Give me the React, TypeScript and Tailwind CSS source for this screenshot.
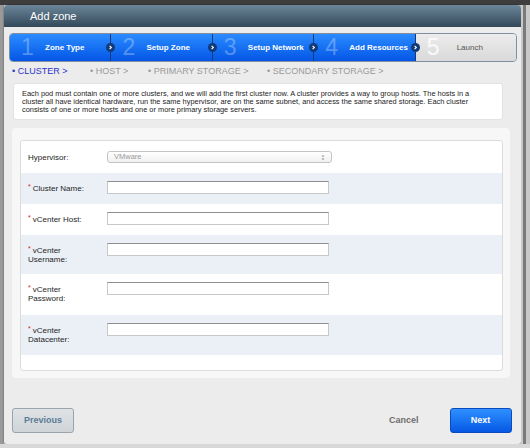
import React from "react";

const steps = [
  { n: "1", label: "Zone Type" },
  { n: "2", label: "Setup Zone" },
  { n: "3", label: "Setup Network" },
  { n: "4", label: "Add Resources" },
];

function Chevron() {
  return (
    <div className="w-[9px] h-[9px] rounded-full bg-[#123a78] flex items-center justify-center">
      <svg width="5" height="5" viewBox="0 0 5 5">
        <path d="M1.6 0.8 L3.4 2.5 L1.6 4.2" stroke="#ffffff" strokeWidth="1.1" fill="none" />
      </svg>
    </div>
  );
}

function Row({
  label,
  label2,
  req,
  h,
  blue,
  select,
}: {
  label: string;
  label2?: string;
  req?: boolean;
  h: string;
  blue?: boolean;
  select?: boolean;
}) {
  return (
    <div className={`flex ${h} ${blue ? "bg-[#eaf0f6]" : "bg-white"}`}>
      <div className="w-[86px] pl-[7px] pt-[11px] text-[8px] leading-[9px] text-[#1e1e1e]">
        <div className="flex">
          {req ? <span className="text-[#d22] text-[7px] leading-[7px] mr-[2px] -mt-[1px]">*</span> : null}
          <span>{label}</span>
        </div>
        {label2 ? <div>{label2}</div> : null}
      </div>
      <div className="pt-[8px]">
        {select ? (
          <div className="mt-[1px] w-[225px] h-[12px] rounded-[3px] border border-[#c4c4c4] bg-gradient-to-b from-[#ffffff] to-[#f0f0f0] flex items-center justify-between px-[6px]">
            <span className="text-[7.5px] text-[#9a9a9a]">VMware</span>
            <svg width="4" height="7" viewBox="0 0 4 7">
              <path d="M0.5 2.6 L2 1 L3.5 2.6 Z M0.5 4.4 L2 6 L3.5 4.4 Z" fill="#8a8a8a" />
            </svg>
          </div>
        ) : (
          <div className="w-[222px] h-[13px] bg-white border border-[#c8c8c8] border-t-[#8e8e8e] border-t-[1.5px]" />
        )}
      </div>
    </div>
  );
}

export default function App() {
  return (
    <div className="w-[530px] h-[448px] overflow-hidden bg-[#d2d2d2] flex flex-col font-['Liberation_Sans',Arial,sans-serif]">
      <div className="h-[5px] bg-[#3e3e3e] shrink-0" />
      <div className="flex flex-1">
        <div className="w-[4px] bg-[#9a9a9a] shrink-0" />
        <div className="w-[517px] h-[439px] shrink-0 flex flex-col bg-[#ececec] rounded-t-[4px] rounded-b-[3px] overflow-hidden shadow-[0_0_2px_rgba(0,0,0,0.5)]">
          {/* header */}
          <div className="h-[22px] bg-gradient-to-b from-[#6c879a] to-[#33495a] flex items-center pl-[26px] shrink-0">
            <span className="text-[11px] text-white">Add zone</span>
          </div>
          {/* steps */}
          <div className="mt-[6px] ml-[5px] w-[508px] h-[29px] relative flex rounded-[4px] overflow-hidden border border-[#7f8fa0]">
            {steps.map((s) => (
              <div
                key={s.n}
                className="flex-1 h-full bg-gradient-to-b from-[#2b8bff] to-[#0655e6] border-r border-[#153a7a] flex items-center"
              >
                <span className="ml-[11px] w-[24px] text-[23px] leading-none text-white/30">{s.n}</span>
                <span className="text-[8px] font-bold text-white">{s.label}</span>
              </div>
            ))}
            <div className="flex-1 h-full bg-gradient-to-b from-[#ececec] to-[#d9d9d9] flex items-center">
              <span className="ml-[11px] w-[30px] text-[23px] leading-none text-white/80">5</span>
              <span className="text-[8px] text-[#555]">Launch</span>
            </div>
            {[96, 197.5, 299, 400.5].map((x) => (
              <div key={x} className="absolute top-[9px]" style={{ left: x }}>
                <Chevron />
              </div>
            ))}
          </div>
          {/* sub steps */}
          <div className="mt-[4px] ml-[8px] h-[11px] flex items-center text-[9px] leading-none text-[#9a9a9a]">
            <span className="w-[78px] text-[#2b35c8]">• CLUSTER &gt;</span>
            <span className="w-[58px]">• HOST &gt;</span>
            <span className="w-[119px]">• PRIMARY STORAGE &gt;</span>
            <span>• SECONDARY STORAGE &gt;</span>
          </div>
          {/* description */}
          <div className="mt-[6px] ml-[9px] w-[490px] h-[37px] bg-white rounded-[3px] border border-[#e2e2e2] pl-[8px] pt-[6px] text-[7.4px] leading-[8px] text-[#222]">
            <div className="whitespace-nowrap">
              Each pod must contain one or more clusters, and we will add the first cluster now. A cluster provides a way to group hosts. The hosts in a
            </div>
            <div className="whitespace-nowrap">
              cluster all have identical hardware, run the same hypervisor, are on the same subnet, and access the same shared storage. Each cluster
            </div>
            <div className="whitespace-nowrap">consists of one or more hosts and one or more primary storage servers.</div>
          </div>
          {/* form panel */}
          <div className="mt-[8px] ml-[8px] w-[498px] h-[250px] bg-[#f7f7f7] rounded-[4px] pt-[12px] pl-[8px]">
            <div className="w-[483px] h-[231px] bg-white border border-[#dcdcdc] rounded-[3px] overflow-hidden pt-[1px]">
              <Row label="Hypervisor:" h="h-[31px]" select />
              <Row label="Cluster Name:" req h="h-[31px]" blue />
              <Row label="vCenter Host:" req h="h-[31px]" />
              <Row label="vCenter" label2="Username:" req h="h-[39px]" blue />
              <Row label="vCenter" label2="Password:" req h="h-[41px]" />
              <Row label="vCenter" label2="Datacenter:" req h="h-[40px]" blue />
            </div>
          </div>
          {/* buttons */}
          <div className="mt-[30px] flex items-center pl-[8px]">
            <div className="w-[62px] h-[25px] rounded-[3px] border border-[#9aa4ac] bg-gradient-to-b from-[#dfe3e6] to-[#cfd4d8] flex items-center justify-center">
              <span className="text-[9px] font-bold text-[#5b7b96]">Previous</span>
            </div>
            <span className="ml-[315px] text-[9px] font-bold text-[#6e6e6e]">Cancel</span>
            <div className="ml-[31px] w-[62px] h-[25px] rounded-[3px] bg-gradient-to-b from-[#2f90ff] to-[#0757e4] border border-[#0a4bc0] flex items-center justify-center">
              <span className="text-[9px] font-bold text-white">Next</span>
            </div>
          </div>
        </div>
        <div className="flex-1 bg-[#c9c9c9] flex">
          <div className="ml-[2px] w-[3px] bg-[#7a7a7a]" />
        </div>
      </div>
      <div className="h-[4px] bg-[#d8d8d8] shrink-0" />
    </div>
  );
}
